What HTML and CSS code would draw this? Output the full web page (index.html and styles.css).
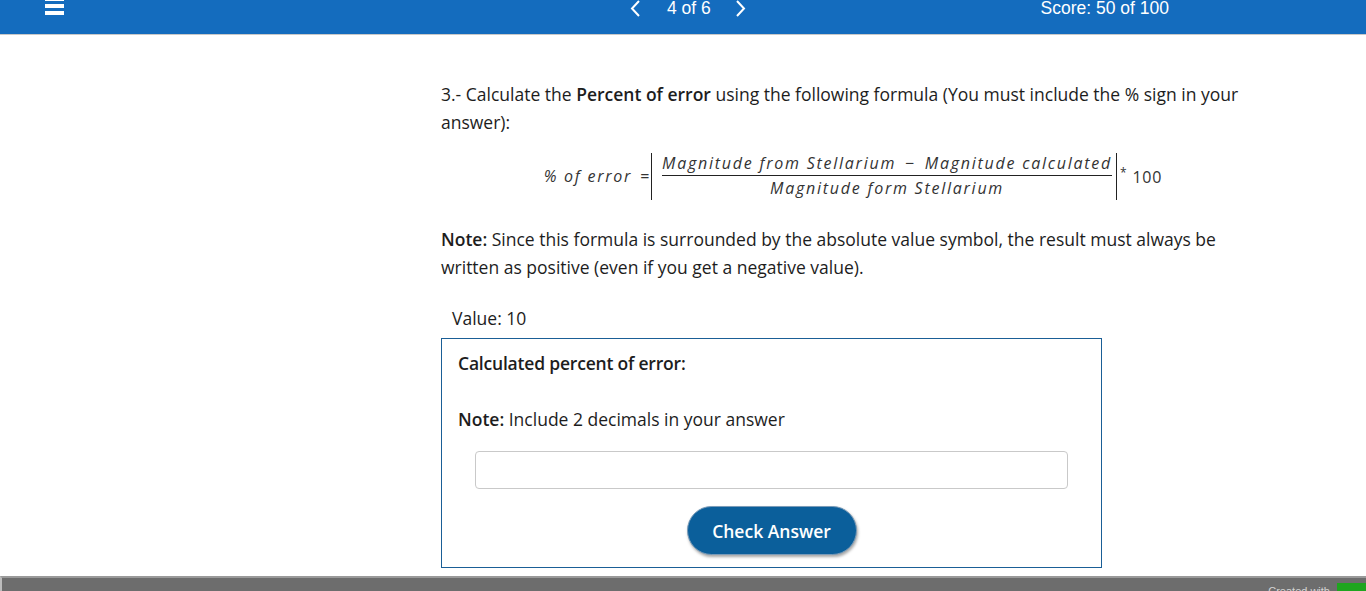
FILE: index.html
```html
<!DOCTYPE html>
<html lang="en">
<head>
<meta charset="utf-8">
<title>Question 4 of 6</title>
<link rel="stylesheet" href="styles.css">
</head>
<body>
<header class="topbar">
  <div class="left">
    <span class="burger"><i></i><i></i><i></i></span>
  </div>
  <nav class="pager">
    <svg class="arrow" width="12" height="18" viewBox="0 0 12 18"><path d="M9 1 L2 8.5 L9 16" fill="none" stroke="#fff" stroke-width="2"/></svg>
    <span class="count">4 of 6</span>
    <svg class="arrow" width="12" height="18" viewBox="0 0 12 18"><path d="M3 1 L10 8.5 L3 16" fill="none" stroke="#fff" stroke-width="2"/></svg>
  </nav>
  <div class="score">Score: 50 of 100</div>
</header>

<main class="content">
  <p class="para">3.- Calculate the <b>Percent of error</b> using the following formula (You must include the % sign in your answer):</p>

  <div class="formula">
    <span class="lhs">% of error</span>
    <span class="eq">=</span>
    <span class="abs">
      <span class="frac">
        <span class="num">Magnitude from Stellarium <span class="minus">−</span> Magnitude calculated</span>
        <span class="den">Magnitude form Stellarium</span>
      </span>
    </span>
    <span class="times"><sup>*</sup> 100</span>
  </div>

  <p class="para note"><b>Note:</b> Since this formula is surrounded by the absolute value symbol, the result must always be written as positive (even if you get a negative value).</p>

  <div class="value">Value: 10</div>

  <section class="box">
    <div class="box-title">Calculated percent of error:</div>
    <div class="box-note"><b>Note:</b> Include 2 decimals in your answer</div>
    <input class="answer" type="text" aria-label="Answer">
    <div class="btn-row"><button class="check">Check Answer</button></div>
  </section>
</main>

<footer class="footer">
  <span class="created">Created with</span><span class="logo"></span>
</footer>
</body>
</html>
```

FILE: styles.css
```css
html, body {
  margin: 0;
  padding: 0;
  background: #fff;
}
body {
  font-family: "Open Sans", "Liberation Sans", sans-serif;
  color: #1d1d1d;
  overflow: hidden;
  height: 591px;
  display: flex;
  flex-direction: column;
}

.topbar {
  height: 34px;
  background: #146cbe;
  border-bottom: 1px solid #c8c8c8;
  display: flex;
  align-items: flex-start;
  font-family: "Liberation Sans", Arial, sans-serif;
  color: #fff;
  font-size: 17.5px;
  flex: 0 0 auto;
}
.left {
  width: 630px;
  padding-left: 45px;
  box-sizing: border-box;
}
.burger {
  display: flex;
  flex-direction: column;
  gap: 3px;
  width: 19px;
  margin-top: -3px;
}
.burger i {
  display: block;
  height: 4px;
  background: #fff;
}
.pager {
  display: flex;
  align-items: flex-start;
}
.count {
  margin: 0 23px 0 25px;
  line-height: 17px;
}
.score {
  margin-left: auto;
  margin-right: 197px;
  line-height: 16px;
}

.content {
  margin-left: 441px;
  width: 824px;
  padding-top: 45px;
  flex: 1 0 auto;
}
.para {
  margin: 0;
  font-size: 17.5px;
  line-height: 28px;
}
.para b { font-weight: 600; }

.formula {
  display: flex;
  align-items: center;
  justify-content: center;
  margin: 15px 0 0;
  height: 50px;
  font-family: "Open Sans", sans-serif;
  font-style: italic;
  font-weight: 400;
  font-size: 16px;
  color: #333;
  letter-spacing: 1.75px;
}
.lhs { margin-right: 8px; }
.eq { font-style: normal; margin-right: 0; }
.abs {
  border-left: 1px solid #222;
  border-right: 1px solid #222;
  padding: 0 4px 0 10px;
  height: 47px;
  display: flex;
  align-items: center;
}
.frac {
  display: flex;
  flex-direction: column;
  align-items: center;
}
.num {
  border-bottom: 1px solid #222;
  padding: 0 0 1px;
  line-height: 22px;
}
.minus { font-style: normal; margin: 0 3px; }
.den { line-height: 24px; }
.times {
  font-style: normal;
  margin-left: 3px;
  letter-spacing: 0.8px;
}
.times sup { font-size: 12px; vertical-align: 6px; }

.note { margin-top: 24px; }

.value {
  font-size: 17.5px;
  line-height: 28px;
  margin: 23px 0 0 11px;
}

.box {
  width: 661px;
  box-sizing: border-box;
  border: 1px solid #1a5e96;
  margin-top: 6px;
  padding: 10px 16px 11px;
  height: 230px;
}
.box-title {
  font-size: 17.5px;
  font-weight: 600;
  line-height: 28px;
  letter-spacing: -0.2px;
}
.box-note {
  font-size: 17.5px;
  line-height: 28px;
  margin-top: 28px;
}
.box-note b { font-weight: 600; }
.answer {
  display: block;
  box-sizing: border-box;
  width: 593px;
  height: 38px;
  margin: 18px 0 0 17px;
  border: 1px solid #c9c9c9;
  border-radius: 4px;
  background: #fff;
}
.btn-row {
  display: flex;
  justify-content: center;
  margin-top: 17px;
}
.check {
  width: 170px;
  height: 49px;
  border-radius: 25px;
  border: 1px solid #7a9bb8;
  background: #0b5f9b;
  color: #fff;
  font-family: "Open Sans", sans-serif;
  font-size: 17.5px;
  font-weight: 600;
  box-shadow: 1px 2px 3px rgba(0,0,0,0.35);
}

.footer {
  flex: 0 0 auto;
  height: 13px;
  border-top: 2px solid #9a9a9a;
  background: #6d6d6d;
  border-left: 2px solid #bcbcbc;
  display: flex;
  justify-content: flex-end;
  align-items: flex-start;
  overflow: hidden;
}
.created {
  font-family: "Liberation Sans", Arial, sans-serif;
  font-size: 11px;
  color: #d4d4d4;
  line-height: 11px;
  margin-top: 8px;
  margin-right: 7px;
}
.logo {
  width: 29px;
  height: 13px;
  margin-top: 5px;
  background: #1fa51f;
}
```
